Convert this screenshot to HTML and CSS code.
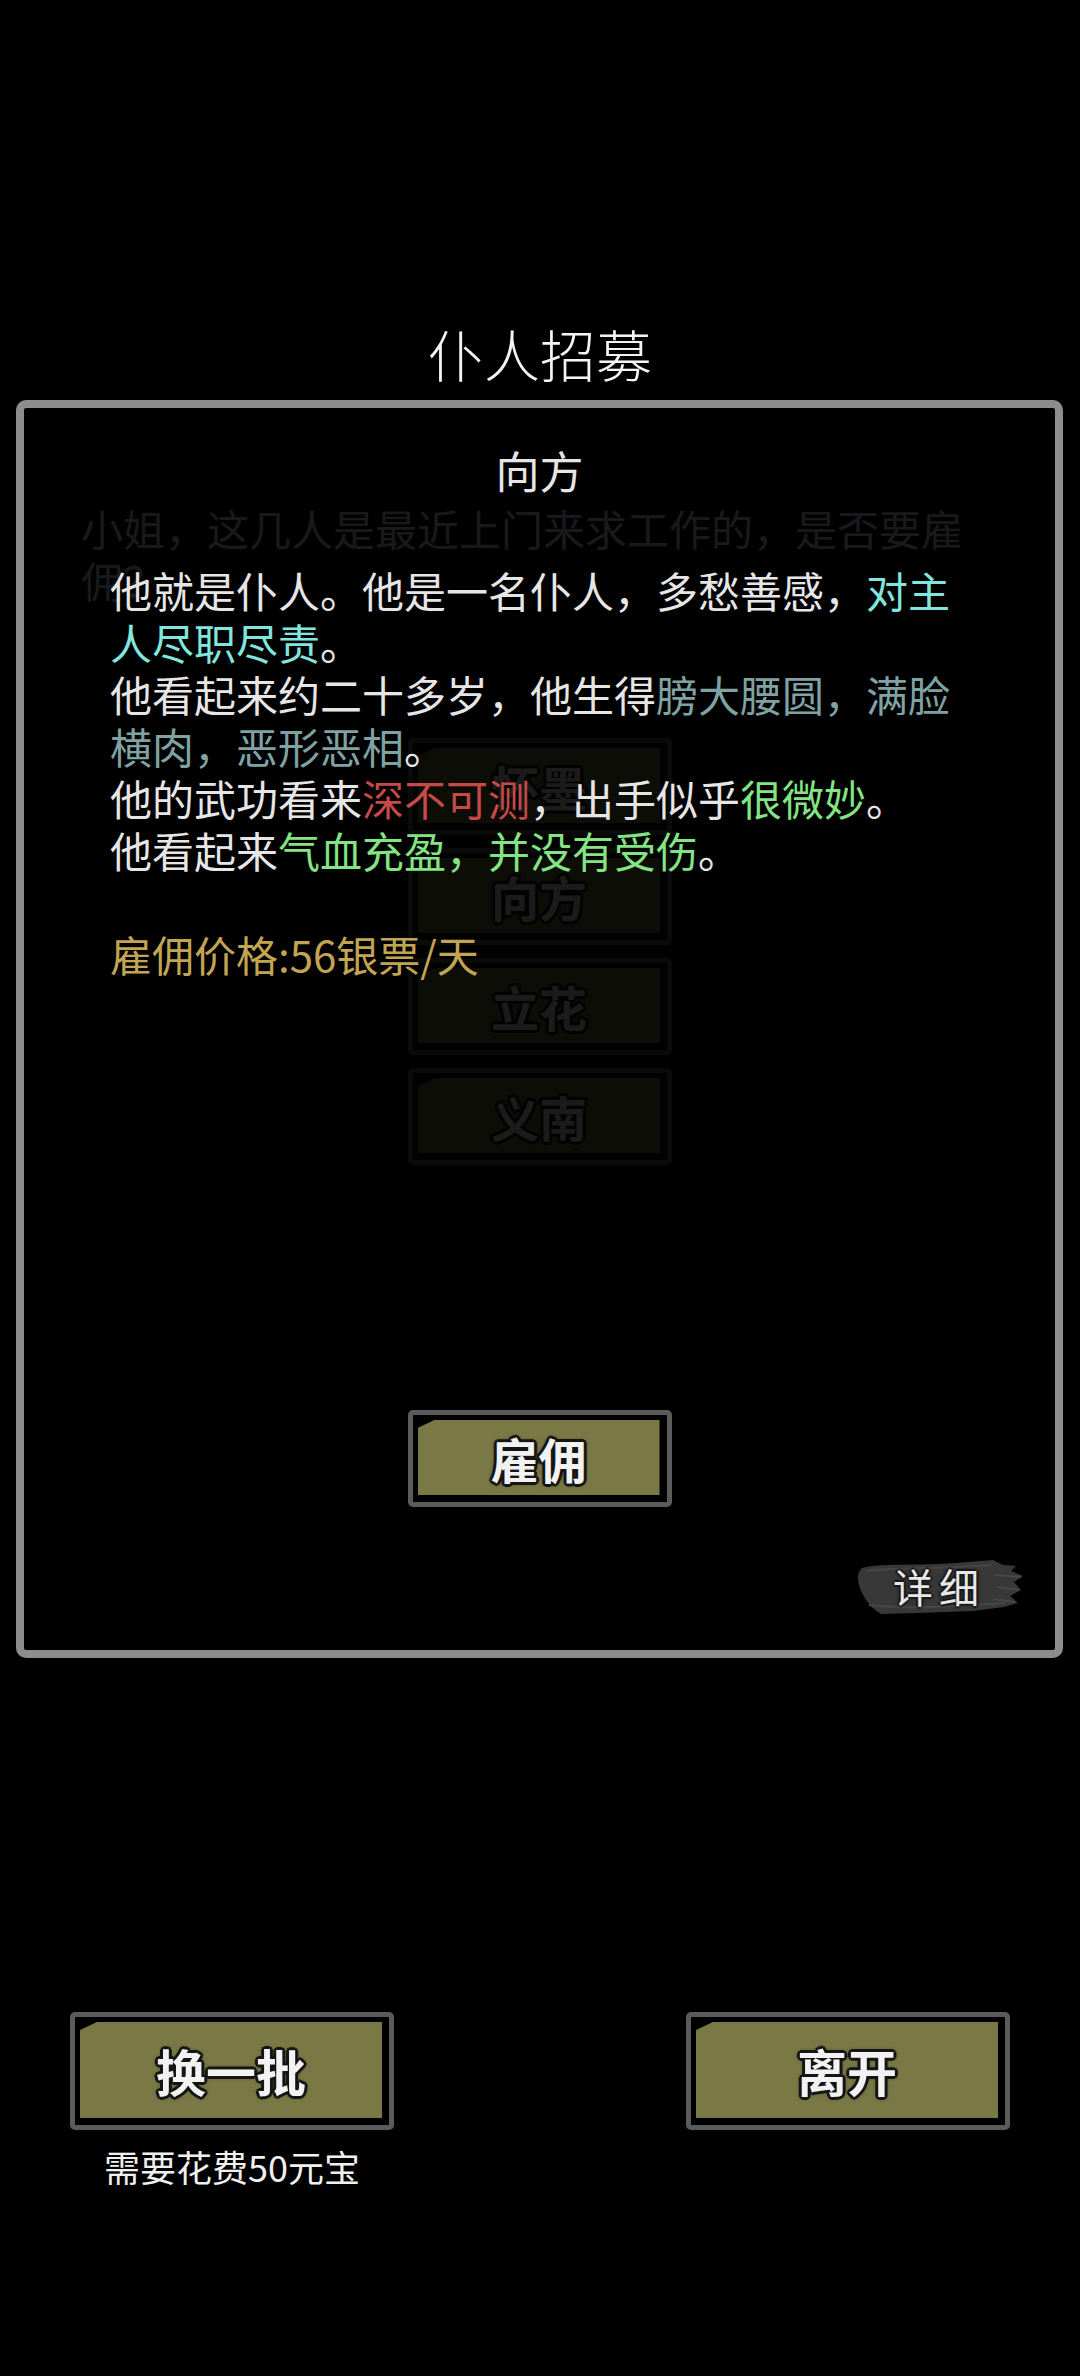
FILE: index.html
```html
<!DOCTYPE html>
<html lang="zh-CN">
<head>
  <meta charset="UTF-8">
  <meta name="viewport" content="width=device-width, initial-scale=1.0">
  <title>仆人招募</title>
  <link rel="stylesheet" href="styles.css">
</head>
<body>
  <div id="page">
    <h1 id="title">仆人招募</h1>

    <div id="stage">
      <!-- the recruit list under the popup -->
      <div id="recruit-list">
        <p class="intro">小姐，这几人是最近上门来求工作的，是否要雇佣？</p>
        <div class="names">
          <div class="btn name-btn"><span class="face">怀墨</span></div>
          <div class="btn name-btn"><span class="face">向方</span></div>
          <div class="btn name-btn"><span class="face">立花</span></div>
          <div class="btn name-btn"><span class="face">义南</span></div>
        </div>
      </div>

      <!-- servant info popup -->
      <div id="info-popup">
        <h2 class="popup-name">向方</h2>
        <p class="desc">他就是仆人。他是一名仆人，多愁善感，<span class="c-cyan">对主人尽职尽责</span>。<br>他看起来约二十多岁，他生得<span class="c-teal">膀大腰圆，满脸横肉，恶形恶相</span>。<br>他的武功看来<span class="c-red">深不可测</span>，出手似乎<span class="c-green">很微妙</span>。<br>他看起来<span class="c-green">气血充盈，并没有受伤</span>。</p>
        <p class="price">雇佣价格:56银票/天</p>
        <div class="btn hire-btn"><span class="face">雇佣</span></div>
        <div class="detail">
          <svg class="brush" viewBox="0 0 168 58" preserveAspectRatio="none">
            <path d="M7 11 C22 6 60 9 100 6 L138 3 L148 8 L161 9 L156 14 L168 19 L159 25 L166 33 L155 39 L163 46 L149 50 L118 54 L62 56 L26 57 C15 51 9 41 5 31 C2 23 2 15 7 11 Z" fill="#383838"/>
            <path d="M12 14 C40 10 90 12 136 8 M14 48 C50 52 100 50 150 46 M140 18 L166 20 M142 30 L164 33 M138 42 L160 45" stroke="#474747" stroke-width="2" fill="none"/>
          </svg>
          <span class="detail-text">详细</span>
        </div>
      </div>
    </div>

    <div id="bottom-bar">
      <div class="bar-col">
        <div class="btn big-btn"><span class="face">换一批</span></div>
        <div class="cost">需要花费50元宝</div>
      </div>
      <div class="bar-col">
        <div class="btn big-btn"><span class="face">离开</span></div>
      </div>
    </div>
  </div>
</body>
</html>
```

FILE: styles.css
```css
body {
  margin: 0;
  background: #000;
  color: #e6e6e6;
  font-family: "Noto Sans CJK SC", "Noto Sans", sans-serif;
  height: 2376px;
  overflow: hidden;
}

#page {
  display: flex;
  flex-direction: column;
}

#title {
  margin: 0;
  padding-top: 313px;
  line-height: 80px;
  font-size: 56px;
  font-weight: 300;
  text-align: center;
  color: #f4f4f4;
}

#stage {
  position: relative;
  margin-top: 7px;
  height: 1258px;
}

/* Recruit list (dimmed by the popup) */
#recruit-list {
  display: flex;
  flex-direction: column;
}

.intro {
  margin: 102px 0 0 81px;
  width: 900px;
  font-size: 42px;
  line-height: 52px;
  color: #d2e4ea;
}

.names {
  display: flex;
  flex-direction: column;
  align-items: center;
  gap: 13px;
  margin-top: 132px;
}

/* Olive buttons */
.btn {
  box-sizing: border-box;
  display: flex;
  border: 5px solid #5b5b5b;
  border-radius: 5px;
  background: #000;
  padding: 5px 7px 7px 5px;
}

.btn .face {
  flex: 1;
  display: flex;
  align-items: center;
  justify-content: center;
  background: #7a7844;
  clip-path: polygon(17px 0, 100% 0, 100% 100%, 0 100%, 0 8px);
  color: #f2f2f2;
  font-weight: 700;
  text-shadow: 3px 0 0 #151515, -3px 0 0 #151515, 0 3px 0 #151515, 0 -3px 0 #151515,
    2px 2px 0 #151515, -2px 2px 0 #151515, 2px -2px 0 #151515, -2px -2px 0 #151515,
    0 0 5px #000;
}

.name-btn,
.hire-btn {
  width: 264px;
  height: 97px;
  font-size: 48px;
}

.big-btn {
  width: 324px;
  height: 118px;
  font-size: 50px;
}

/* Popup */
#info-popup {
  position: absolute;
  top: 0;
  bottom: 0;
  left: 16px;
  right: 17px;
  border: 8px solid #8d8d8d;
  border-radius: 10px;
  background: rgba(0, 0, 0, 0.89);
  display: flex;
  flex-direction: column;
}

.popup-name {
  margin: 34px 0 0;
  font-size: 44px;
  line-height: 56px;
  font-weight: 400;
  text-align: center;
  color: #e6e6e6;
}

.desc {
  margin: 66px 0 0 86px;
  width: 845px;
  font-size: 42px;
  line-height: 52px;
  color: #e6e6e6;
}

.c-cyan { color: #80e6de; }
.c-teal { color: #7fa2a2; }
.c-red { color: #c64a48; }
.c-green { color: #84e484; }

.price {
  margin: 52px 0 0 86px;
  font-size: 42px;
  line-height: 52px;
  color: #c2a552;
}

.hire-btn {
  align-self: center;
  margin-top: 430px;
}

.detail {
  position: relative;
  align-self: flex-end;
  margin: 50px 32px 0 0;
  width: 168px;
  height: 58px;
  display: flex;
  align-items: center;
  justify-content: center;
}

.brush {
  position: absolute;
  top: 0;
  left: 0;
  width: 100%;
  height: 100%;
}

.detail-text {
  position: relative;
  font-size: 40px;
  letter-spacing: 6px;
  color: #e8e8e8;
  text-shadow: 2px 0 0 #1a1a1a, -2px 0 0 #1a1a1a, 0 2px 0 #1a1a1a, 0 -2px 0 #1a1a1a, 0 0 4px #000;
}

/* Bottom bar */
#bottom-bar {
  display: flex;
  justify-content: space-between;
  align-items: flex-start;
  margin-top: 354px;
  padding: 0 70px;
}

.bar-col {
  display: flex;
  flex-direction: column;
  align-items: center;
}

.cost {
  margin-top: 14px;
  font-size: 36px;
  line-height: 44px;
  color: #f0f0f0;
}
```
